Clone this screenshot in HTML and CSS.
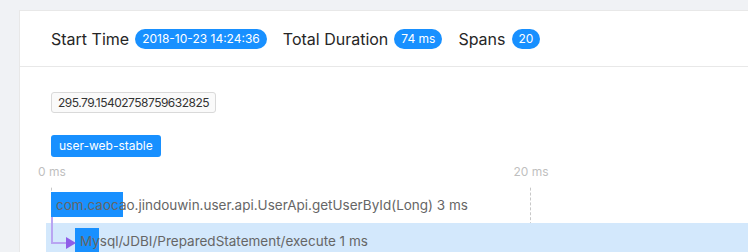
FILE: index.html
```html
<!DOCTYPE html>
<html>

<head>
    <meta charset="UTF-8">
    <meta name="viewport" content="width=device-width, initial-scale=1.0">
    <title>Trace Detail</title>
    <link rel="stylesheet" href="styles.css">
</head>

<body>

    <!-- =========== Trace card =========== -->
    <div class="card">
        <div class="cardHead">
            <span class="label">Start Time</span>
            <span class="pill">2018-10-23 14:24:36</span>
            <span class="label">Total Duration</span>
            <span class="pill">74 ms</span>
            <span class="label">Spans</span>
            <span class="pill">20</span>
        </div>

        <div class="cardBody">
            <div class="traceId">295.79.15402758759632825</div>
            <div class="appTag">user-web-stable</div>

            <!-- ============ Timeline ================ -->
            <div class="timeline">
                <div class="tick" style="left: 0px;">
                    <span class="tickLabel">0 ms</span>
                </div>
                <div class="tick" style="left: 479px;">
                    <span class="tickLabel">20 ms</span>
                </div>

                <div class="rows">
                    <div class="row">
                        <div class="bar" style="left: 0px; width: 72px;"></div>
                        <span class="spanName" style="padding-left: 5px;">com.caocao.jindouwin.user.api.UserApi.getUserById(Long) 3 ms</span>
                    </div>
                    <div class="row active">
                        <svg class="link" width="30" height="34" viewBox="0 0 30 34">
                            <path d="M1 0 V26 H16" fill="none" stroke="#b9a5f2" stroke-width="2" />
                            <polygon points="15,20 25,26 15,32" fill="#8f5ee8" />
                        </svg>
                        <div class="bar" style="left: 24px; width: 24px;"></div>
                        <span class="spanName" style="padding-left: 29px;">Mysql/JDBI/PreparedStatement/execute 1 ms</span>
                    </div>
                </div>
            </div>
        </div>
    </div>

</body>

</html>
```

FILE: styles.css
```css
* {
    font-family: Inter, "Noto Sans", sans-serif;
    margin: 0;
    padding: 0;
    box-sizing: border-box;
}

:root {
    --blue: #1890ff;
    --white: #fff;
    --gray: #f0f2f5;
    --line: #e8e8e8;
    --black1: #262626;
    --black2: #666;
}

body {
    background: var(--gray);
    padding: 10px 0 0 19px;
    min-height: 100vh;
    overflow: hidden;
}

.card {
    width: 1000px;
    background: var(--white);
    border: 1px solid var(--line);
    min-height: 260px;
}

.cardHead {
    display: flex;
    align-items: center;
    height: 56px;
    padding: 0 31px;
    border-bottom: 1px solid var(--line);
}

.label {
    font-size: 16px;
    color: var(--black1);
    margin-right: 6px;
}

.pill {
    height: 20px;
    line-height: 20px;
    padding: 0 7px;
    border-radius: 10px;
    background: var(--blue);
    color: var(--white);
    font-size: 12px;
    margin-right: 16px;
}

.cardBody {
    padding: 24px 31px;
}

.traceId {
    display: inline-block;
    height: 21px;
    line-height: 19px;
    padding: 0 6px;
    font-size: 12px;
    letter-spacing: -0.5px;
    color: #333;
    background: #fafafa;
    border: 1px solid #d9d9d9;
    border-radius: 3px;
}

.appTag {
    width: fit-content;
    margin-top: 22px;
    height: 22px;
    line-height: 22px;
    padding: 0 8px;
    font-size: 12px;
    color: var(--white);
    background: var(--blue);
    border-radius: 3px;
}

.timeline {
    position: relative;
    margin-top: 6px;
    padding-top: 24px;
}

.tick {
    position: absolute;
    top: 0;
    bottom: -40px;
    width: 0;
    border-left: 1px dashed #c8c8c8;
}

.tick::before {
    content: '';
    position: absolute;
    top: 0;
    left: -2px;
    width: 4px;
    height: 23px;
    background: var(--white);
}

.tickLabel {
    position: absolute;
    top: 1px;
    left: 0;
    transform: translateX(-50%);
    font-size: 12px;
    color: #bfbfbf;
    white-space: nowrap;
}

.rows {
    position: relative;
    margin-left: -5px;
}

.row {
    position: relative;
    height: 36px;
    padding-left: 5px;
    display: flex;
    align-items: center;
}

.row.active {
    background: #d3e8fc;
}

.bar {
    position: absolute;
    top: 5px;
    height: 25px;
    margin-left: 5px;
    background: var(--blue);
}

.spanName {
    position: relative;
    font-size: 13.5px;
    color: var(--black2);
    white-space: nowrap;
    margin-top: -1px;
}

.link {
    position: absolute;
    left: 5px;
    top: -6px;
    z-index: 1;
}
```
